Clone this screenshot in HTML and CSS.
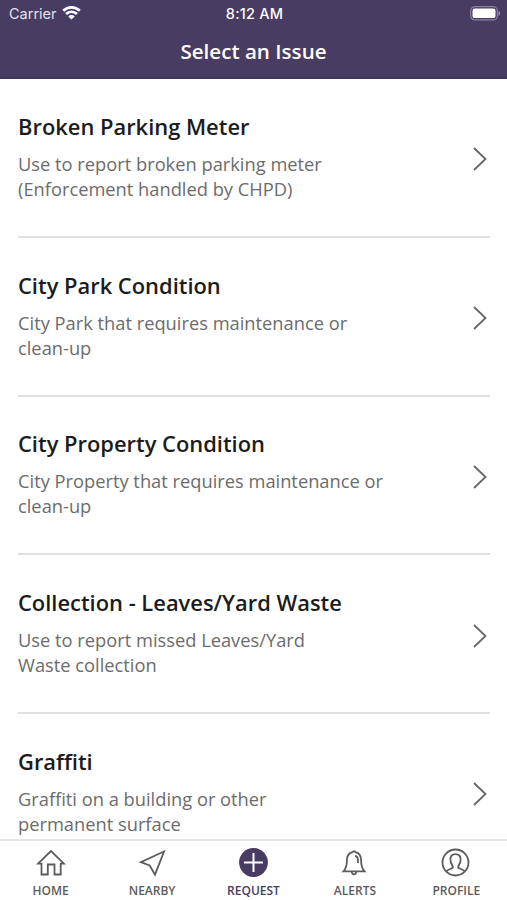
FILE: index.html
```html
<!DOCTYPE html>
<html lang="en">
<head>
    <meta charset="UTF-8">
    <meta name="viewport" content="width=device-width, initial-scale=1.0">
    <title>Select an Issue</title>
    <link rel="stylesheet" href="styles.css">
</head>
<body>
    <header class="header">
        <div class="status-bar">
            <div class="carrier">
                <span>Carrier</span>
                <svg class="wifi" width="19" height="15" viewBox="0 0 19 15" fill="none" stroke="#fff" stroke-width="2.7">
                    <path d="M1.2 5.8a11.7 11.7 0 0 1 16.6 0"/>
                    <path d="M4.1 9a7.6 7.6 0 0 1 10.8 0"/>
                    <path d="M9.5 14.6L6.3 11.4a4.5 4.5 0 0 1 6.4 0z" fill="#fff" stroke="none"/>
                </svg>
            </div>
            <div class="time">8:12 AM</div>
            <div class="battery">
                <svg width="31" height="15" viewBox="0 0 31 15">
                    <rect x="0.7" y="0.7" width="26.6" height="13.2" rx="4" fill="none" stroke="#8b819f" stroke-width="1.2"/>
                    <rect x="2.5" y="2.5" width="23" height="9.6" rx="2.2" fill="#fff"/>
                    <path d="M28.5 5c2.2.8 2.2 4 0 4.8z" fill="#9c93ae"/>
                </svg>
            </div>
        </div>
        <h1>Select an Issue</h1>
    </header>

    <main class="issues">
        <a class="issue">
            <div class="issue-text">
                <h2>Broken Parking Meter</h2>
                <p>Use to report broken parking meter<br>(Enforcement handled by CHPD)</p>
            </div>
            <svg class="chevron" viewBox="0 0 14 24"><path d="M1 1l11.500 11L1 23"/></svg>
        </a>
        <a class="issue">
            <div class="issue-text">
                <h2>City Park Condition</h2>
                <p>City Park that requires maintenance or<br>clean-up</p>
            </div>
            <svg class="chevron" viewBox="0 0 14 24"><path d="M1 1l11.500 11L1 23"/></svg>
        </a>
        <a class="issue">
            <div class="issue-text">
                <h2>City Property Condition</h2>
                <p>City Property that requires maintenance or<br>clean-up</p>
            </div>
            <svg class="chevron" viewBox="0 0 14 24"><path d="M1 1l11.500 11L1 23"/></svg>
        </a>
        <a class="issue">
            <div class="issue-text">
                <h2>Collection - Leaves/Yard Waste</h2>
                <p>Use to report missed Leaves/Yard<br>Waste collection</p>
            </div>
            <svg class="chevron" viewBox="0 0 14 24"><path d="M1 1l11.500 11L1 23"/></svg>
        </a>
        <a class="issue">
            <div class="issue-text">
                <h2>Graffiti</h2>
                <p>Graffiti on a building or other<br>permanent surface</p>
            </div>
            <svg class="chevron" viewBox="0 0 14 24"><path d="M1 1l11.500 11L1 23"/></svg>
        </a>
    </main>

    <nav class="tabs">
        <a class="tab">
            <svg viewBox="0 0 30 30">
                <path d="M2 15.700L15 3l13 12.700h-3.300v10.800h-6.200V16.500h-6.700v10H5.500V15.700z"/>
            </svg>
            <span>HOME</span>
        </a>
        <a class="tab">
            <svg viewBox="0 0 30 30">
                <path d="M27 3.500L3.800 14.200l8.900 3.300 5.300 9.200z"/>
            </svg>
            <span>NEARBY</span>
        </a>
        <a class="tab active">
            <svg viewBox="0 0 30 30">
                <circle class="disc" cx="14.500" cy="14.500" r="14.400"/>
                <path class="plus" d="M14.500 5v19M5 14.500h19"/>
            </svg>
            <span>REQUEST</span>
        </a>
        <a class="tab">
            <svg viewBox="0 0 30 30">
                <path d="M12.500 4.200a1.600 1.600 0 0 1 3 0c4 .9 5.600 4 5.600 8.400 0 5.300.8 8 3.400 10.700H3.500c2.600-2.700 3.400-5.400 3.400-10.700 0-4.400 1.600-7.500 5.600-8.400z"/>
                <path d="M11.700 24a2.400 3.200 0 0 0 4.600 0M15 7.800c2.200.4 3 2 3 4.700v2.500"/>
            </svg>
            <span>ALERTS</span>
        </a>
        <a class="tab">
            <svg viewBox="0 0 30 30">
                <circle cx="14.500" cy="14.500" r="13"/>
                <path d="M5 23.500c1.700-2 4-2.400 6.200-3.300.8-.4.8-1.800.2-2.600-1.600-2-2-4-2-6 0-3.500 2-5.500 5.100-5.500s5.100 2 5.100 5.500c0 2-.4 4-2 6-.6.800-.6 2.200.2 2.600 2.200.9 4.500 1.300 6.200 3.300"/>
            </svg>
            <span>PROFILE</span>
        </a>
    </nav>
</body>
</html>
```

FILE: styles.css
```css
* {
    box-sizing: border-box;
}
body {
    margin: 0;
    height: 100vh;
    display: flex;
    flex-direction: column;
    overflow: hidden;
    background-color: #fff;
    font-family: "Open Sans", "Noto Sans", sans-serif;
}
h1, h2, p {
    margin: 0;
}
.header {
    flex: none;
    height: 79px;
    background-color: #483c63;
    border-bottom: 1px solid #3d3159;
    color: #fff;
}
.status-bar {
    display: grid;
    grid-template-columns: 1fr auto 1fr;
    align-items: center;
    height: 27px;
    padding: 0 7px 0 9px;
    font-family: Inter, sans-serif;
    font-size: 14.5px;
}
.carrier {
    display: flex;
    align-items: center;
    gap: 5px;
    color: #e4e1ea;
}
.wifi {
    margin-top: -2px;
}
.time {
    font-weight: 500;
    letter-spacing: 0.2px;
}
.battery {
    display: flex;
    justify-content: flex-end;
}
.battery svg {
    margin-right: -1px;
}
.header h1 {
    font-size: 20.6px;
    font-weight: 600;
    line-height: 49px;
    text-align: center;
}
.issues {
    flex: 1;
    min-height: 0;
    overflow: hidden;
    padding: 0 17px 0 18px;
}
.issue {
    display: flex;
    justify-content: space-between;
    align-items: center;
    height: 158.75px;
    border-bottom: 2px solid #e0e0e0;
}
.issue h2 {
    margin-bottom: 9px;
    font-size: 21.9px;
    font-weight: 600;
    line-height: 30px;
    color: #1c1c1c;
}
.issue-text {
    margin-top: -2px;
}
.issue p {
    font-size: 18.3px;
    line-height: 25px;
    color: #6c6c6c;
}
.chevron {
    width: 14px;
    height: 24px;
    margin-top: 4px;
    margin-right: 3px;
    fill: none;
    stroke: #666;
    stroke-width: 1.8;
}
.tabs {
    flex: none;
    display: flex;
    height: 61px;
    border-top: 2px solid #e6e6e6;
    background-color: #fff;
}
.tab {
    flex: 1;
    display: flex;
    flex-direction: column;
    align-items: center;
    padding-top: 7px;
    font-size: 12px;
    font-weight: 600;
    line-height: 16px;
    color: #5c5c5c;
}
.tab svg {
    width: 30px;
    height: 30px;
    margin-bottom: 5px;
    fill: none;
    stroke: #5c5c5c;
    stroke-width: 1.8;
}
.tab.active {
    color: #483c63;
}
.tab .disc {
    fill: #483c63;
    stroke: none;
}
.tab .plus {
    stroke: #fff;
    stroke-width: 2;
}
```
